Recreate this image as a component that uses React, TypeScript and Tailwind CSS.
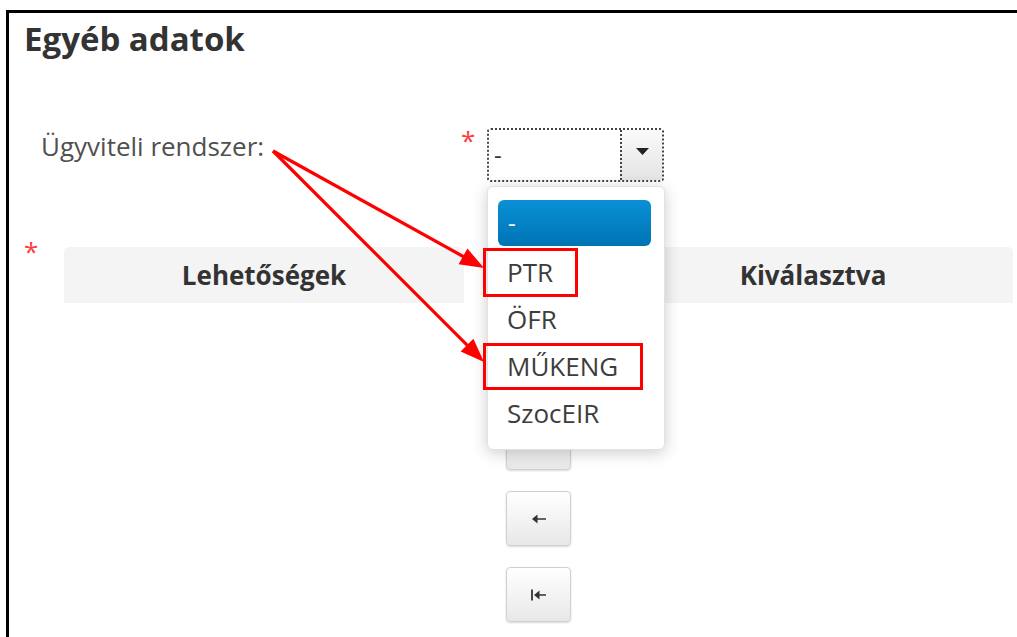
import type { ReactNode } from "react";

const OPTIONS = ["PTR", "ÖFR", "MŰKENG", "SzocEIR"];

// filled arrowhead for the annotation arrows
function head(x1: number, y1: number, x2: number, y2: number, len = 24, half = 9) {
  const dx = x2 - x1;
  const dy = y2 - y1;
  const d = Math.hypot(dx, dy);
  const ux = dx / d;
  const uy = dy / d;
  const bx = x2 - ux * len;
  const by = y2 - uy * len;
  return `${x2},${y2} ${bx - uy * half},${by + ux * half} ${bx + uy * half},${by - ux * half}`;
}

function Arrow({ x1, y1, x2, y2 }: { x1: number; y1: number; x2: number; y2: number }) {
  const d = Math.hypot(x2 - x1, y2 - y1);
  const ex = x2 - ((x2 - x1) / d) * 20;
  const ey = y2 - ((y2 - y1) / d) * 20;
  return (
    <g>
      <line x1={x1} y1={y1} x2={ex} y2={ey} stroke="#ff0000" strokeWidth={3.2} />
      <polygon points={head(x1, y1, x2, y2)} fill="#ff0000" />
    </g>
  );
}

function MoveButton({ children }: { children: ReactNode }) {
  return (
    <button
      type="button"
      className="flex h-[55px] w-[65px] items-center justify-center rounded-[4px] border border-[#d0d0d0] bg-gradient-to-b from-white to-[#e8e8e8] shadow-[0_1px_2px_rgba(0,0,0,0.15)]"
    >
      {children}
    </button>
  );
}

function LeftIcon({ all = false }: { all?: boolean }) {
  return (
    <svg width="18" height="14" viewBox="0 0 18 14">
      {all && <line x1="2" y1="1.5" x2="2" y2="12.5" stroke="#333" strokeWidth="1.8" />}
      <line x1={all ? 7 : 5} y1="7" x2={all ? 16 : 16} y2="7" stroke="#333" strokeWidth="1.5" />
      <polygon points={all ? "4,7 9.5,2.5 9.5,11.5" : "2,7 7.5,2.5 7.5,11.5"} fill="#333" />
    </svg>
  );
}

function RightIcon({ all = false }: { all?: boolean }) {
  return (
    <svg width="18" height="14" viewBox="0 0 18 14">
      {all && <line x1="16" y1="1.5" x2="16" y2="12.5" stroke="#333" strokeWidth="1.8" />}
      <line x1="2" y1="7" x2={all ? 11 : 13} y2="7" stroke="#333" strokeWidth="1.5" />
      <polygon points={all ? "14,7 8.5,2.5 8.5,11.5" : "16,7 10.5,2.5 10.5,11.5"} fill="#333" />
    </svg>
  );
}

export default function App() {
  return (
    <div className="relative h-[637px] w-[1017px] overflow-hidden bg-white font-['Open_Sans',sans-serif]">
      <div className="ml-[6px] mt-[10px] h-full border-l-[3px] border-t-[3px] border-black">
        <h1 className="pl-[15px] pt-[6px] text-[33px] font-bold leading-[40px] text-[#333]">Egyéb adatok</h1>

        {/* Ügyviteli rendszer */}
        <div className="mt-[69px] flex items-start pl-[32px]">
          <div className="w-[420px] pt-[2px] text-[26px] leading-[33px] text-[#505050]">Ügyviteli rendszer:</div>
          <div className="w-[26px] text-[26px] leading-[24px] text-[#ff3b3b]">*</div>
          <div className="flex h-[54px] w-[177px] rounded-[4px] border-2 border-dotted border-[#444]">
            <div className="flex flex-1 items-center bg-white pl-[5px] text-[24px] text-[#333]">-</div>
            <div className="flex w-[42px] items-center justify-center border-l-2 border-dotted border-[#444] bg-gradient-to-b from-[#fafafa] to-[#e4e4e4]">
              <svg width="13" height="8" viewBox="0 0 13 8" className="-mt-[6px]">
                <polygon points="0,0 13,0 6.5,7" fill="#222" />
              </svg>
            </div>
          </div>
        </div>

        {/* Lehetőségek / Kiválasztva */}
        <div className="mt-[65px] flex pl-[15px]">
          <div className="w-[40px] -mt-[8px] text-[26px] leading-[24px] text-[#ff3b3b]">*</div>
          <div className="w-[400px]">
            <div className="flex h-[56px] items-center justify-center rounded-t-[5px] bg-[#f4f4f4] text-[26px] font-bold text-[#333]">
              Lehetőségek
            </div>
          </div>
          <div className="flex w-[149px] flex-col items-center gap-[21px] pt-[92px]">
            <MoveButton>
              <RightIcon all />
            </MoveButton>
            <MoveButton>
              <RightIcon />
            </MoveButton>
            <MoveButton>
              <LeftIcon />
            </MoveButton>
            <MoveButton>
              <LeftIcon all />
            </MoveButton>
          </div>
          <div className="w-[400px]">
            <div className="flex h-[56px] items-center justify-center rounded-t-[5px] bg-[#f4f4f4] text-[26px] font-bold text-[#333]">
              Kiválasztva
            </div>
          </div>
        </div>
      </div>

      {/* open select list */}
      <div className="absolute left-[487px] top-[186px] h-[264px] w-[178px] rounded-[6px] border border-[#e2e2e2] bg-white pb-[16px] pl-[10px] pr-[13px] pt-[13px] shadow-[0_3px_16px_rgba(0,0,0,0.2)]">
        <div className="flex h-[46px] items-center rounded-[6px] bg-gradient-to-b from-[#0b90d6] to-[#0074b4] pl-[10px] text-[24px] text-white">
          -
        </div>
        <div className="mt-[3px]">
          {OPTIONS.map((o) => (
            <div key={o} className="flex h-[47px] items-center pl-[9px] text-[26px] text-[#3d3d3d]">
              {o}
            </div>
          ))}
        </div>
      </div>

      {/* annotation */}
      <svg className="pointer-events-none absolute left-0 top-0" width="1017" height="637">
        <Arrow x1={273} y1={151} x2={484} y2={268} />
        <Arrow x1={273} y1={151} x2={484} y2={362} />
        <rect x={484.5} y={249.5} width={92} height={46} fill="none" stroke="#ff0000" strokeWidth={3} />
        <rect x={484.5} y={344.5} width={157} height={44} fill="none" stroke="#ff0000" strokeWidth={3} />
      </svg>
    </div>
  );
}
